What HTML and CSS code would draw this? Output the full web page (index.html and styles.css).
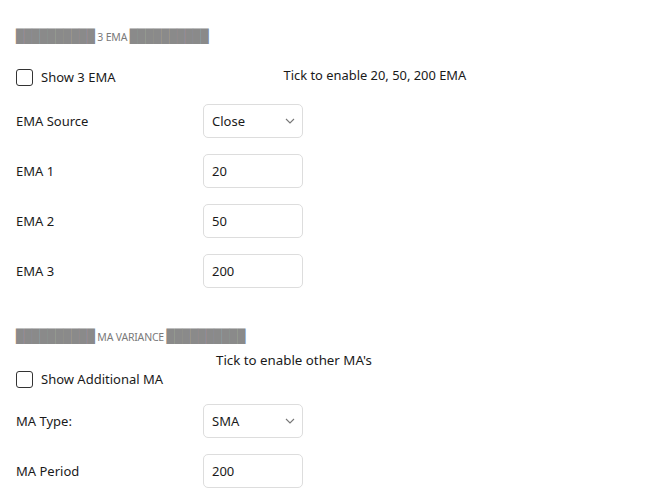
FILE: index.html
```html
<!DOCTYPE html>
<html>
<head>
<meta charset="utf-8">
<link rel="stylesheet" href="styles.css">
</head>
<body>
<div class="page">
  <section class="group g1">
    <div class="heading"><span class="blocks">██████████</span> 3 EMA <span class="blocks">██████████</span></div>
    <div class="check-row">
      <label class="check"><span class="box"></span><span>Show 3 EMA</span></label>
      <span class="tip tip1">Tick to enable 20, 50, 200 EMA</span>
    </div>
    <div class="field"><span class="label">EMA Source</span><div class="control select"><span>Close</span><svg class="chev" width="10" height="6" viewBox="0 0 10 6"><path d="M1 1l4 4 4-4" fill="none" stroke="#777" stroke-width="1.1"/></svg></div></div>
    <div class="field"><span class="label">EMA 1</span><div class="control"><span>20</span></div></div>
    <div class="field"><span class="label">EMA 2</span><div class="control"><span>50</span></div></div>
    <div class="field"><span class="label">EMA 3</span><div class="control"><span>200</span></div></div>
  </section>
  <section class="group g2">
    <div class="heading"><span class="blocks">██████████</span> MA VARIANCE <span class="blocks">██████████</span></div>
    <div class="tip tip2">Tick to enable other MA's</div>
    <div class="check-row2">
      <label class="check"><span class="box"></span><span>Show Additional MA</span></label>
    </div>
    <div class="field"><span class="label">MA Type:</span><div class="control select"><span>SMA</span><svg class="chev" width="10" height="6" viewBox="0 0 10 6"><path d="M1 1l4 4 4-4" fill="none" stroke="#777" stroke-width="1.1"/></svg></div></div>
    <div class="field"><span class="label">MA Period</span><div class="control"><span>200</span></div></div>
  </section>
</div>
</body>
</html>
```
FILE: styles.css
```css
html, body { margin: 0; padding: 0; background: #fff; }
body { font-family: "Noto Sans", "Open Sans", sans-serif; color: #1a1a1a; font-size: 13px; }
.page { padding: 28px 16px 0 16px; }
.heading { font-size: 10.5px; color: #7a7a7a; height: 18px; line-height: 18px; white-space: nowrap; letter-spacing: -0.2px; }
.blocks { font-family: "DejaVu Sans Mono", monospace; font-size: 13.1px; color: #8a8a8a; letter-spacing: 0; }
.check-row { display: flex; align-items: flex-start; height: 36px; margin-top: 22px; }
.check { display: flex; align-items: center; gap: 8px; font-size: 13px; }
.box { width: 15px; height: 15px; border: 1.2px solid #333; border-radius: 3px; box-sizing: content-box; }
.tip { color: #1a1a1a; }
.tip1 { font-size: 12.9px; margin-left: 168px; margin-top: -2px; }
.field { display: flex; align-items: center; height: 34px; margin-bottom: 16px; }
.label { width: 187px; font-size: 13px; }
.control { width: 100px; height: 34px; box-sizing: border-box; border: 1px solid #ddd; border-radius: 5px; display: flex; align-items: center; justify-content: space-between; padding: 0 7px 0 8px; font-size: 13px; }
.g2 { margin-top: 40px; }
.tip2 { font-size: 13.3px; margin-left: 200px; margin-top: 6px; height: 17px; line-height: 17px; }
.check-row2 { height: 34px; display: flex; align-items: flex-start; margin-top: 1px; }
```
